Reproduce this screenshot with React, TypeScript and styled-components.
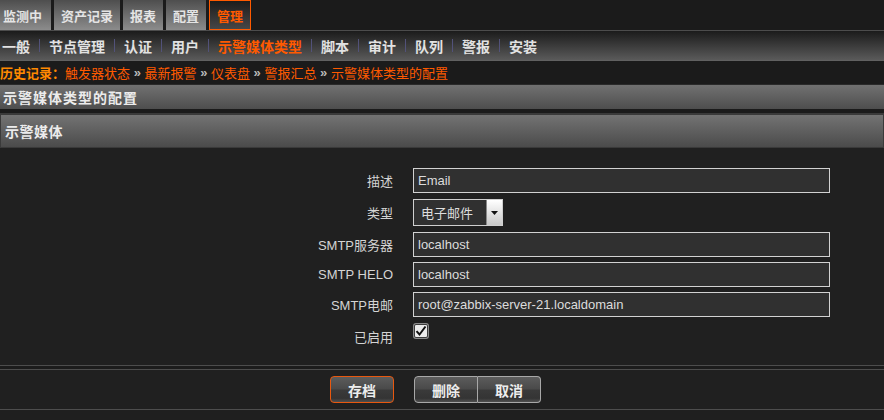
import React from "react";
import styled, { createGlobalStyle } from "styled-components";

const GlobalStyle = createGlobalStyle`
  html, body { margin: 0; padding: 0; background: #1c1c1c; }
  body { font-family: "Liberation Sans", "Noto Sans CJK SC", sans-serif; }
`;

const Page = styled.div`
  width: 884px;
  font-family: "Liberation Sans", "Noto Sans CJK SC", sans-serif;
  color: #d6d6d6;
`;

const TopTabs = styled.nav`
  display: flex;
  gap: 3px;
  height: 30px;
  background: #1b1b1b;
  border-bottom: 1px solid #4c4c4c;
`;

const Tab = styled.div<{ $active?: boolean }>`
  display: flex;
  align-items: center;
  box-sizing: border-box;
  padding: 0 7px;
  font-size: 13px;
  font-weight: bold;
  color: ${(p) => (p.$active ? "#ff5a00" : "#e4e4e4")};
  background: ${(p) =>
    p.$active
      ? "linear-gradient(#1c1c1c, #464646)"
      : "linear-gradient(#4e4e4e, #8c8c8c)"};
  border: ${(p) => (p.$active ? "1px solid #ff5a00" : "none")};
  &:first-child {
    padding-left: 3px;
    padding-right: 9px;
  }
`;

const SubNav = styled.nav`
  display: flex;
  align-items: center;
  height: 29px;
  padding-left: 2px;
  background: linear-gradient(#1b1b1b, #5a5a5a);
  border-bottom: 1px solid #616161;
`;

const SubItem = styled.span<{ $active?: boolean }>`
  font-size: 14px;
  font-weight: bold;
  color: ${(p) => (p.$active ? "#ff5a00" : "#e2e2e2")};
`;

const SubSep = styled.span`
  width: 1px;
  height: 13px;
  margin: 0 9px 0 9px;
  background: #52527a;
`;

const Breadcrumb = styled.div`
  display: flex;
  align-items: center;
  height: 23px;
  font-size: 13px;
  background: #1b1b1b;
  border-bottom: 1px solid #2a2a2a;
  white-space: pre;
`;

const CrumbTitle = styled.span`
  font-weight: bold;
  color: #ff8a00;
`;

const CrumbLink = styled.span`
  color: #ff5a00;
`;

const CrumbArrow = styled.span`
  color: #b8b8b8;
  font-weight: bold;
`;

const PageHeader = styled.div`
  display: flex;
  align-items: center;
  height: 24px;
  padding-left: 3px;
  font-size: 14px;
  font-weight: bold;
  letter-spacing: 1px;
  color: #ececec;
  background: linear-gradient(#717171, #4e4e4e);
`;

const HeaderGap = styled.div`
  height: 5px;
  background: #1b1b1b;
  border-bottom: 1px solid #3a3a3a;
  box-sizing: border-box;
`;

const SectionHeader = styled.div`
  display: flex;
  align-items: center;
  box-sizing: border-box;
  height: 34px;
  padding-left: 4px;
  font-size: 14px;
  font-weight: bold;
  letter-spacing: 0.5px;
  color: #ececec;
  background: linear-gradient(#737373, #4b4b4b);
  border: 1px solid #3a3a3a;
`;

const Form = styled.div`
  display: grid;
  grid-template-columns: 393px 417px;
  column-gap: 20px;
  row-gap: 5px;
  padding: 20px 0 15px;
  background: #202020;
  border-bottom: 1px solid #4d4d4d;
`;

const Label = styled.label`
  justify-self: end;
  align-self: center;
  font-size: 13px;
  color: #d4d4d4;
`;

const TextInput = styled.div`
  box-sizing: border-box;
  height: 25px;
  display: flex;
  align-items: center;
  padding-left: 4px;
  font-size: 13px;
  color: #dcdcdc;
  background: #303030;
  border: 1px solid #d2d2d2;
`;

const Select = styled.div`
  box-sizing: border-box;
  display: flex;
  width: 90px;
  height: 27px;
  margin: 1px 0;
  background: #303030;
  border: 1px solid #cfcfcf;
`;

const SelectText = styled.span`
  flex: 1;
  display: flex;
  align-items: center;
  padding-left: 7px;
  font-size: 13px;
  color: #dedede;
`;

const SelectButton = styled.span`
  width: 15px;
  display: flex;
  align-items: center;
  justify-content: center;
  background: linear-gradient(#ffffff, #c9c9c9);
  border-left: 1px solid #8a8a8a;
`;

const CheckRow = styled.div`
  height: 28px;
`;

const CheckBox = styled.span`
  box-sizing: border-box;
  display: flex;
  align-items: center;
  justify-content: center;
  width: 14px;
  height: 14px;
  margin: 2px 0 0 1px;
  background: #ececec;
  border: 1px solid #3c3c3c;
  box-shadow: 0 0 0 1px #8a8a8a;
  border-radius: 2px;
`;

const Footer = styled.div`
  display: flex;
  justify-content: center;
  gap: 20px;
  margin-top: 3px;
  padding: 6px 13px 6px 0;
  background: #202020;
  border-top: 1px solid #4d4d4d;
  border-bottom: 1px solid #4d4d4d;
`;

const Button = styled.button<{ $main?: boolean }>`
  box-sizing: border-box;
  width: 64px;
  height: 27px;
  padding: 0;
  font-family: "Liberation Sans", "Noto Sans CJK SC", sans-serif;
  font-size: 14px;
  font-weight: bold;
  color: #ededed;
  background: linear-gradient(#5c5c5c, #4a4a4a 48%, #3a3a3a 52%, #343434 85%, #505050);
  border: 1px solid ${(p) => (p.$main ? "#e8580f" : "#a8a8a8")};
  border-radius: 4px;
`;

const ButtonGroup = styled.div`
  display: flex;
  & > button:first-child {
    border-top-right-radius: 0;
    border-bottom-right-radius: 0;
  }
  & > button:last-child {
    width: 63px;
    border-left: none;
    border-top-left-radius: 0;
    border-bottom-left-radius: 0;
  }
`;

const Rest = styled.div`
  height: 20px;
  background: #1f1f1f;
`;

const tabs = ["监测中", "资产记录", "报表", "配置", "管理"];
const subs = ["一般", "节点管理", "认证", "用户", "示警媒体类型", "脚本", "审计", "队列", "警报", "安装"];
const crumbs = ["触发器状态", "最新报警", "仪表盘", "警报汇总", "示警媒体类型的配置"];

export default function App() {
  return (
    <Page>
      <GlobalStyle />
      <TopTabs>
        {tabs.map((t) => (
          <Tab key={t} $active={t === "管理"}>
            {t}
          </Tab>
        ))}
      </TopTabs>
      <SubNav>
        {subs.map((s, i) => (
          <React.Fragment key={s}>
            {i > 0 && <SubSep />}
            <SubItem $active={s === "示警媒体类型"}>{s}</SubItem>
          </React.Fragment>
        ))}
      </SubNav>
      <Breadcrumb>
        <CrumbTitle>历史记录：</CrumbTitle>
        {crumbs.map((c, i) => (
          <React.Fragment key={c}>
            {i > 0 && <CrumbArrow> » </CrumbArrow>}
            <CrumbLink>{c}</CrumbLink>
          </React.Fragment>
        ))}
      </Breadcrumb>
      <PageHeader>示警媒体类型的配置</PageHeader>
      <HeaderGap />
      <SectionHeader>示警媒体</SectionHeader>
      <Form>
        <Label>描述</Label>
        <TextInput>Email</TextInput>
        <Label>类型</Label>
        <Select>
          <SelectText>电子邮件</SelectText>
          <SelectButton>
            <svg width="7" height="4" viewBox="0 0 7 4">
              <path d="M0 0h7L3.5 4z" fill="#111" />
            </svg>
          </SelectButton>
        </Select>
        <Label>SMTP服务器</Label>
        <TextInput>localhost</TextInput>
        <Label>SMTP HELO</Label>
        <TextInput>localhost</TextInput>
        <Label>SMTP电邮</Label>
        <TextInput>root@zabbix-server-21.localdomain</TextInput>
        <Label>已启用</Label>
        <CheckRow>
          <CheckBox>
            <svg width="12" height="12" viewBox="0 0 12 12">
              <path d="M1.5 6.2l3 3.3L10.5 1.5" stroke="#111" strokeWidth="2" fill="none" />
            </svg>
          </CheckBox>
        </CheckRow>
      </Form>
      <Footer>
        <Button $main>存档</Button>
        <ButtonGroup>
          <Button>删除</Button>
          <Button>取消</Button>
        </ButtonGroup>
      </Footer>
      <Rest />
    </Page>
  );
}
